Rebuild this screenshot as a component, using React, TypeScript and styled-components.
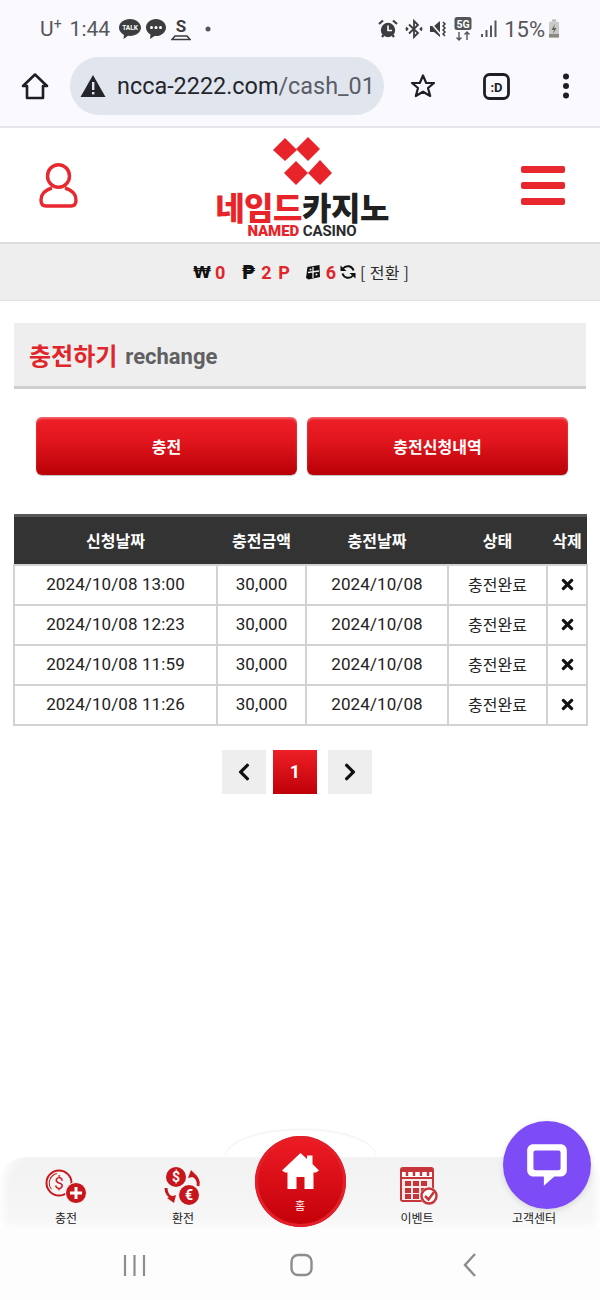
import React from "react";
import styled, { createGlobalStyle } from "styled-components";
import { FaTimes, FaChevronLeft, FaChevronRight } from "react-icons/fa";

const Global = createGlobalStyle`
  html, body { margin: 0; padding: 0; background: #fff; }
  * { box-sizing: border-box; }
`;

const SANS = `Roboto, "Noto Sans CJK KR", sans-serif`;
const KR = `"Noto Sans CJK KR", Roboto, sans-serif`;

const Page = styled.div`
  position: relative;
  width: 600px;
  height: 1300px;
  overflow: hidden;
  display: flex;
  flex-direction: column;
  background: #fff;
  font-family: ${SANS};
`;

const Chrome = styled.div`
  height: 128px;
  background: #f9f9fe;
  border-bottom: 2px solid #e6e6ea;
`;

const StatusBar = styled.div`
  height: 57px;
  padding: 1px 40px 0;
  display: flex;
  align-items: center;
  justify-content: space-between;
  color: #55565a;
  font-size: 21px;
`;

const StatusGroup = styled.div`
  display: flex;
  align-items: center;
`;

const StatusIcon = styled.span<{ $gap: number }>`
  display: flex;
  margin-left: ${(p) => p.$gap}px;
`;

const Carrier = styled.span`
  margin-right: 8px;
  sup { font-size: 14px; line-height: 0; vertical-align: 7px; }
`;

const Percent = styled.span`
  margin-left: 7px;
  font-size: 22px;
`;

const Toolbar = styled.div`
  height: 58px;
  padding: 0 0 0 21px;
  display: flex;
  align-items: center;
`;

const UrlPill = styled.div`
  width: 314px;
  height: 58px;
  margin-left: 21px;
  margin-right: 26px;
  border-radius: 29px;
  background: #e1e5ee;
  display: flex;
  align-items: center;
  padding-left: 10px;
  overflow: hidden;
  flex-shrink: 0;
`;

const UrlText = styled.span`
  margin-left: 11px;
  font-size: 23.4px;
  color: #24262b;
  white-space: nowrap;
  span { color: #5b5e66; }
`;

const ToolIcon = styled.div<{ $gap?: number }>`
  display: flex;
  margin-left: ${(p) => p.$gap ?? 0}px;
`;

const Header = styled.header`
  height: 114px;
  padding: 0 35px 0 39px;
  display: flex;
  align-items: center;
  justify-content: space-between;
  background: #fff;
`;

const Logo = styled.div`
  width: 176px;
  margin-left: 5px;
  align-self: flex-start;
  padding-top: 9px;
  display: flex;
  flex-direction: column;
  align-items: center;
`;

const LogoMark = styled.svg`
  display: block;
  margin-bottom: 4px;
`;

const LogoKr = styled.div`
  font-family: ${KR};
  font-weight: 900;
  font-size: 32px;
  line-height: 34px;
  height: 35px;
  letter-spacing: -0.5px;
  white-space: nowrap;
  color: #e8242a;
  span { color: #202020; }
`;

const LogoEn = styled.div`
  font-family: ${SANS};
  font-weight: 900;
  font-size: 15px;
  line-height: 15px;
  letter-spacing: -0.1px;
  white-space: nowrap;
  color: #e8242a;
  span { color: #2b2b2b; font-weight: 700; }
`;

const Burger = styled.div`
  width: 44px;
  display: flex;
  flex-direction: column;
  gap: 9px;
`;

const BurgerLine = styled.div`
  height: 7px;
  border-radius: 2px;
  background: #e8282e;
`;

const WalletBar = styled.div`
  height: 59px;
  background: #eeeeee;
  border-top: 2px solid #dcdcdc;
  border-bottom: 1px solid #e2e2e2;
  display: flex;
  align-items: center;
  justify-content: flex-start;
  padding-left: 194px;
  font-size: 17px;
  color: #222;
`;

const Symbol = styled.span<{ $width: number; $size: number }>`
  width: ${(p) => p.$width}px;
  display: flex;
  justify-content: center;
  font-family: "DejaVu Sans", sans-serif;
  font-weight: 700;
  font-size: ${(p) => p.$size}px;
  color: #111;
`;

const Amount = styled.span<{ $before: number; $after: number }>`
  font-family: ${SANS};
  font-weight: 700;
  font-size: 18px;
  letter-spacing: 1px;
  color: #e0252b;
  margin-left: ${(p) => p.$before}px;
  margin-right: ${(p) => p.$after}px;
`;

const Convert = styled.span`
  margin-left: 4px;
  font-family: ${KR};
  font-size: 16px;
  letter-spacing: 0.3px;
  color: #2a2a2a;
`;

const Main = styled.main`
  padding: 22px 14px 0;
`;

const TitleBox = styled.div`
  height: 66px;
  background: #eeeeee;
  border-bottom: 3px solid #cfcfcf;
  padding: 0 15px;
  display: flex;
  align-items: center;
  gap: 8px;
`;

const TitleKr = styled.h1`
  margin: 0;
  font-family: ${KR};
  font-weight: 700;
  font-size: 24px;
  color: #e0252b;
`;

const TitleEn = styled.span`
  font-weight: 700;
  font-size: 22px;
  color: #5f6062;
  padding-top: 4px;
`;

const ButtonRow = styled.div`
  margin-top: 28px;
  padding: 0 22px;
  display: grid;
  grid-template-columns: 261px 261px;
  gap: 10px;
`;

const RedButton = styled.button`
  height: 58px;
  border: 0;
  padding: 0;
  border-radius: 6px;
  background: linear-gradient(#ee1f27 0%, #e2161e 40%, #b80006 100%);
  box-shadow: inset 0 2px 2px rgba(255, 255, 255, 0.3), 0 1px 1px rgba(0, 0, 0, 0.25);
  color: #fff;
  font-family: ${KR};
  font-weight: 700;
  font-size: 16px;
`;

const Table = styled.table`
  margin: 39px 0 0 -1px;
  width: 573px;
  table-layout: fixed;
  border-collapse: collapse;
`;

const HeadCell = styled.th`
  height: 49px;
  padding: 0;
  background: #333333;
  border-top: 3px solid #585858;
  color: #fff;
  font-family: ${KR};
  font-weight: 700;
  font-size: 16px;
  text-align: center;
`;

const Cell = styled.td`
  height: 40px;
  padding: 0 0 1px;
  border: 2px solid #d2d2d2;
  background: #fff;
  text-align: center;
  color: #222;
  font-size: 17px;
  letter-spacing: 0.1px;
  font-family: ${SANS};
  svg { display: block; margin: 0 auto; }
`;

const StatusCell = styled(Cell)`
  font-family: ${KR};
  font-size: 16px;
  letter-spacing: 0;
`;

const Pager = styled.nav`
  margin-top: 24px;
  padding-right: 6px;
  display: flex;
  justify-content: center;
`;

const PageBtn = styled.div<{ $active?: boolean }>`
  width: 44px;
  height: 44px;
  margin: ${(p) => (p.$active ? "0 11px 0 7px" : "0")};
  display: flex;
  align-items: center;
  justify-content: center;
  background: ${(p) => (p.$active ? "linear-gradient(#ee1f27, #c00008)" : "#eeeeee")};
  color: ${(p) => (p.$active ? "#fff" : "#111")};
  font-weight: 700;
  font-size: 18px;
`;

const TabBar = styled.div`
  position: relative;
  margin-top: auto;
  height: 71px;
  padding: 0 7.5px;
  display: grid;
  grid-template-columns: repeat(5, 117px);
  background: linear-gradient(#f2f2f2, #f6f6f6 85%, #fbfbfb);
  border-top-left-radius: 26px;
  border-top-right-radius: 26px;
  box-shadow: inset 10px 0 10px -6px #fff, inset -10px 0 10px -6px #fff;
  &::before {
    content: "";
    position: absolute;
    left: 226px;
    top: -27px;
    width: 150px;
    height: 28px;
    background: #fff;
    border-radius: 75px 75px 0 0 / 27px 27px 0 0;
    box-shadow: 0 -1px 2px rgba(0, 0, 0, 0.07);
    clip-path: inset(-4px -4px 1px -4px);
  }
`;

const Tab = styled.div`
  position: relative;
  display: flex;
  flex-direction: column;
  align-items: center;
  justify-content: flex-end;
  padding-bottom: 1px;
`;

const TabIcon = styled.div<{ $shift?: number }>`
  height: 46px;
  display: flex;
  align-items: center;
  justify-content: center;
  margin-left: ${(p) => p.$shift ?? 0}px;
`;

const TabLabel = styled.span`
  font-family: ${KR};
  font-size: 12px;
  line-height: 18px;
  color: #222;
`;

const HomeButton = styled.div`
  position: absolute;
  left: 13px;
  top: -21px;
  width: 91px;
  height: 91px;
  border-radius: 50%;
  background: linear-gradient(#ee1c25, #c30009);
  box-shadow: inset 0 0 0 3px #e3202a;
  display: flex;
  flex-direction: column;
  align-items: center;
  padding-top: 17px;
  color: #fff;
`;

const HomeLabel = styled.span`
  font-family: ${KR};
  font-size: 11px;
  line-height: 14px;
  margin-top: 9px;
`;

const ChatBubble = styled.div`
  position: absolute;
  left: 503px;
  top: 1121px;
  width: 88px;
  height: 88px;
  border-radius: 50%;
  background: #7e4cf7;
  box-shadow: 0 2px 6px rgba(0, 0, 0, 0.12);
  display: flex;
  align-items: center;
  justify-content: center;
`;

const SystemNav = styled.div`
  height: 72px;
  background: #fdfdfe;
  padding: 2px 0 0 123px;
  display: flex;
  align-items: center;
  gap: 144px;
  svg { display: block; }
`;

const rows = ["2024/10/08 13:00", "2024/10/08 12:23", "2024/10/08 11:59", "2024/10/08 11:26"];

const Alarm = () => (
  <svg width="20" height="20" viewBox="0 0 20 20">
    <circle cx="10" cy="11" r="7.2" fill="#3d3d40" />
    <path d="M10 6.500V11.500H14" stroke="#fff" strokeWidth="1.6" fill="none" />
    <path d="M1 5L5 1.500M19 5L15 1.500M4 18l1.500-2M16 18l-1.500-2" stroke="#3d3d40" strokeWidth="2.2" />
  </svg>
);
const Bluetooth = () => (
  <svg width="20" height="22" viewBox="0 0 20 22" fill="none" stroke="#3d3d40" strokeWidth="1.8">
    <path d="M5 6.500L14 15L10 19V3L14 7L5 15.500" />
    <path d="M2 9.500l1.500 1.500L2 12.500M18 9.500l-1.500 1.500L18 12.500" />
  </svg>
);
const Mute = () => (
  <svg width="22" height="22" viewBox="0 0 22 22">
    <path d="M2 8H6L12 3V19L6 14H2Z" fill="#3d3d40" />
    <path d="M1 3L14 18" stroke="#f9f9fe" strokeWidth="1.500" />
    <path d="M15 4l2 2-2 2 2 2-2 2 2 2-2 2 2 2" stroke="#3d3d40" strokeWidth="1.500" fill="none" />
  </svg>
);
const FiveG = () => (
  <svg width="20" height="26" viewBox="0 0 20 26">
    <rect x="1.500" y="1" width="17" height="13" rx="2.500" fill="#55565a" />
    <text x="10" y="11.500" fontSize="10.500" fontWeight="700" fill="#fff" textAnchor="middle" fontFamily="Roboto">5G</text>
    <path d="M6 16V24M3.500 21.500L6 24L8.500 21.500M14 24V16M11.500 18.500L14 16L16.500 18.500" stroke="#55565a" strokeWidth="1.400" fill="none" />
  </svg>
);
const Signal = () => (
  <svg width="17" height="20" viewBox="0 0 17 20" fill="#55565a">
    <rect x="1" y="15" width="2" height="3" />
    <rect x="5.500" y="11" width="2" height="7" />
    <rect x="10" y="6.500" width="2" height="11.500" />
    <rect x="14.500" y="1.500" width="2" height="16.500" />
  </svg>
);
const Battery = () => (
  <svg width="12" height="20" viewBox="0 0 12 20">
    <rect x="4" y="0.500" width="4" height="2" fill="#b5b5b5" />
    <rect x="1" y="2.500" width="10" height="16" rx="1.500" fill="#c9c9c9" />
    <rect x="1" y="15" width="10" height="3.500" fill="#8a8a80" />
    <path d="M7 5L3.500 11H6L5 15L8.500 9H6Z" fill="#65655c" />
  </svg>
);

const Charge = () => (
  <svg width="42" height="34" viewBox="0 0 42 34" fill="none">
    <circle cx="14" cy="14" r="12.500" stroke="#c8161d" strokeWidth="2" />
    <circle cx="14" cy="14" r="9.800" stroke="#c8161d" strokeWidth="1" strokeDasharray="20 42" transform="rotate(140 14 14)" />
    <text x="14" y="20" textAnchor="middle" fontSize="17" fontFamily="Roboto" fill="#c8161d">$</text>
    <circle cx="31" cy="24" r="10.500" fill="#c8161d" stroke="#f4f4f4" strokeWidth="1" />
    <path d="M31 18V30M25 24H37" stroke="#fff" strokeWidth="3" />
  </svg>
);
const Exchange = () => (
  <svg width="38" height="40" viewBox="0 0 38 40" fill="none">
    <circle cx="12" cy="11" r="10" fill="#c8161d" />
    <text x="12" y="16" textAnchor="middle" fontSize="14" fontWeight="700" fontFamily="Roboto" fill="#fff">$</text>
    <circle cx="25" cy="29" r="10" fill="#c8161d" />
    <text x="25" y="34" textAnchor="middle" fontSize="14" fontWeight="700" fontFamily="Roboto" fill="#fff">€</text>
    <path d="M34 20C35 15 33 11 28 9" stroke="#c8161d" strokeWidth="3" />
    <path d="M24 12L27 4L33 10Z" fill="#c8161d" />
    <path d="M2 22C2 27 5 31 9 32" stroke="#c8161d" strokeWidth="3" />
    <path d="M12 29L10 37L3 32Z" fill="#c8161d" />
  </svg>
);
const Calendar = () => (
  <svg width="40" height="40" viewBox="0 0 40 40">
    <rect x="1" y="1" width="34" height="35" rx="3" fill="#c5353a" />
    <rect x="3" y="6" width="30" height="5" fill="#fff" />
    <path d="M8 3V10M15 3V10M22 3V10M29 3V10" stroke="#c5353a" strokeWidth="2.500" />
    <rect x="3" y="13" width="30" height="21" fill="#fbeaea" />
    {[6, 14, 22].map((x) => [15, 22, 28].map((y) => <rect key={`${x}-${y}`} x={x} y={y} width="6" height="5" fill="#c5353a" />))}
    <circle cx="30" cy="30" r="9" fill="#fff" />
    <circle cx="30" cy="30" r="7.500" fill="none" stroke="#c5353a" strokeWidth="2.500" />
    <path d="M26 30L29.500 33.500L35 26" fill="none" stroke="#c5353a" strokeWidth="2.500" />
  </svg>
);

export default function App() {
  return (
    <Page>
      <Global />
      <Chrome>
        <StatusBar>
          <StatusGroup>
            <Carrier>U<sup>+</sup></Carrier>
            <span>1:44</span>
            <StatusIcon $gap={8}>
              <svg width="24" height="22" viewBox="0 0 24 22">
                <path d="M12 1C5.900 1 1 4.900 1 9.700c0 3 2 5.600 5 7.200L5.500 21l4.500-3.200c.6.100 1.300.1 2 .1 6.100 0 11-3.900 11-8.200S18.100 1 12 1Z" fill="#3d3d40" />
                <text x="12" y="12" textAnchor="middle" fontSize="6.500" fontWeight="700" fontFamily="Roboto" fill="#fff">TALK</text>
              </svg>
            </StatusIcon>
            <StatusIcon $gap={3}>
              <svg width="22" height="22" viewBox="0 0 22 22">
                <path d="M11 1C5.500 1 1 4.800 1 9.500c0 3 1.800 5.500 4.500 7L5 21l4.500-3c.5.100 1 .1 1.500.1 5.500 0 10-3.900 10-8.600S16.500 1 11 1Z" fill="#3d3d40" />
                <circle cx="6.500" cy="9.500" r="1.500" fill="#fff" />
                <circle cx="11" cy="9.500" r="1.500" fill="#fff" />
                <circle cx="15.500" cy="9.500" r="1.500" fill="#fff" />
              </svg>
            </StatusIcon>
            <StatusIcon $gap={4}>
              <svg width="20" height="24" viewBox="0 0 20 24">
                <text x="10" y="15" textAnchor="middle" fontSize="17" fontWeight="700" fontFamily="Roboto" fill="#3d3d40">S</text>
                <path d="M1 22.500H19L16 19H4Z" fill="none" stroke="#3d3d40" strokeWidth="1.600" />
              </svg>
            </StatusIcon>
            <StatusIcon $gap={14}>
              <svg width="6" height="6" viewBox="0 0 6 6">
                <circle cx="3" cy="3" r="2.500" fill="#55565a" />
              </svg>
            </StatusIcon>
          </StatusGroup>
          <StatusGroup>
            <Alarm />
            <StatusIcon $gap={6}><Bluetooth /></StatusIcon>
            <StatusIcon $gap={4}><Mute /></StatusIcon>
            <StatusIcon $gap={3}><FiveG /></StatusIcon>
            <StatusIcon $gap={7}><Signal /></StatusIcon>
            <Percent>15%</Percent>
            <StatusIcon $gap={3}><Battery /></StatusIcon>
          </StatusGroup>
        </StatusBar>
        <Toolbar>
          <svg width="28" height="28" viewBox="0 0 28 28" fill="none" stroke="#1d1f24" strokeWidth="2.600" strokeLinejoin="round">
            <path d="M14 2.500L2 14H6V26H22V14H26Z" />
          </svg>
          <UrlPill>
            <svg width="26" height="24" viewBox="0 0 26 24">
              <path d="M13 1L25.500 23H.5Z" fill="#24262b" />
              <rect x="12" y="8" width="2.400" height="8" fill="#e1e5ee" />
              <rect x="12" y="18" width="2.400" height="2.400" fill="#e1e5ee" />
            </svg>
            <UrlText>ncca-2222.com<span>/cash_01</span></UrlText>
          </UrlPill>
          <svg width="26" height="26" viewBox="0 0 26 26" fill="none" stroke="#1d1f24" strokeWidth="2.200" strokeLinejoin="round">
            <path d="M13 2.500L16.200 10H24L18 15L20.200 23L13 18.700L5.800 23L8 15L2 10H9.800Z" />
          </svg>
          <ToolIcon $gap={47}>
            <svg width="27" height="27" viewBox="0 0 27 27">
              <rect x="1.500" y="1.500" width="24" height="24" rx="5" fill="none" stroke="#1d1f24" strokeWidth="2.800" />
              <text x="13.500" y="18.500" textAnchor="middle" fontSize="13" fontWeight="700" fontFamily="Roboto" fill="#1d1f24">:D</text>
            </svg>
          </ToolIcon>
          <ToolIcon $gap={52}>
            <svg width="8" height="26" viewBox="0 0 8 26" fill="#1d1f24">
              <circle cx="4" cy="3.500" r="3" />
              <circle cx="4" cy="13" r="3" />
              <circle cx="4" cy="22.500" r="3" />
            </svg>
          </ToolIcon>
        </Toolbar>
      </Chrome>

      <Header>
        <svg width="39" height="45" viewBox="0 0 39 45" fill="none" stroke="#e8282e" strokeWidth="3.400" strokeLinejoin="round">
          <ellipse cx="19.500" cy="13" rx="11" ry="11.300" />
          <path d="M13 25C6 27 2 31 2 37C2 41 4 43 7 43H32C35 43 37 41 37 37C37 31 33 27 26 25" />
        </svg>
        <Logo>
          <LogoMark width="60" height="48" viewBox="0 0 60 48" fill="#e8242a">
            <path d="M13 1L25 13L13 24L1 13Z" />
            <path d="M36 0L48 12L36 24L24 12Z" />
            <path d="M24 24L36 36L24 48L12 36Z" />
            <path d="M48 23L60 36L48 48L36 36Z" />
          </LogoMark>
          <LogoKr>네임드<span>카지노</span></LogoKr>
          <LogoEn>NAMED <span>CASINO</span></LogoEn>
        </Logo>
        <Burger>
          <BurgerLine />
          <BurgerLine />
          <BurgerLine />
        </Burger>
      </Header>

      <WalletBar>
        <Symbol $width={16} $size={16}>₩</Symbol>
        <Amount $before={5} $after={15}>0</Amount>
        <Symbol $width={14} $size={19}>₱</Symbol>
        <Amount $before={6} $after={14}>2 P</Amount>
        <svg width="16" height="17" viewBox="0 0 16 17">
          <path d="M2.500 3L14.500 1L15 13L3.500 15.500L1 14Z" fill="#111" />
          <path d="M8 3V14M3 8.500L14 7" stroke="#eee" strokeWidth="1.300" />
          <circle cx="5.500" cy="5.500" r="1" fill="#eee" />
          <circle cx="11.500" cy="10.500" r="1" fill="#eee" />
        </svg>
        <Amount $before={5} $after={3}>6</Amount>
        <svg width="16" height="16" viewBox="0 0 16 16" fill="#111">
          <path d="M13.500 6.500A6 6 0 0 0 3 4.500" fill="none" stroke="#111" strokeWidth="2" />
          <path d="M2.500 9.500A6 6 0 0 0 13 11.500" fill="none" stroke="#111" strokeWidth="2" />
          <path d="M0.500 1.500L6.500 7H0.500Z" />
          <path d="M15.500 14.500L9.500 9H15.500Z" />
        </svg>
        <Convert>[ 전환 ]</Convert>
      </WalletBar>

      <Main>
        <TitleBox>
          <TitleKr>충전하기</TitleKr>
          <TitleEn>rechange</TitleEn>
        </TitleBox>
        <ButtonRow>
          <RedButton>충전</RedButton>
          <RedButton>충전신청내역</RedButton>
        </ButtonRow>
        <Table>
          <colgroup>
            <col style={{ width: 203 }} />
            <col style={{ width: 89 }} />
            <col style={{ width: 142 }} />
            <col style={{ width: 99 }} />
            <col style={{ width: 40 }} />
          </colgroup>
          <thead>
            <tr>
              <HeadCell>신청날짜</HeadCell>
              <HeadCell>충전금액</HeadCell>
              <HeadCell>충전날짜</HeadCell>
              <HeadCell>상태</HeadCell>
              <HeadCell>삭제</HeadCell>
            </tr>
          </thead>
          <tbody>
            {rows.map((r) => (
              <tr key={r}>
                <Cell>{r}</Cell>
                <Cell>30,000</Cell>
                <Cell>2024/10/08</Cell>
                <StatusCell>충전완료</StatusCell>
                <Cell><FaTimes size={17} color="#111" /></Cell>
              </tr>
            ))}
          </tbody>
        </Table>
        <Pager>
          <PageBtn><FaChevronLeft size={20} /></PageBtn>
          <PageBtn $active>1</PageBtn>
          <PageBtn><FaChevronRight size={20} /></PageBtn>
        </Pager>
      </Main>

      <TabBar>
        <Tab>
          <TabIcon><Charge /></TabIcon>
          <TabLabel>충전</TabLabel>
        </Tab>
        <Tab>
          <TabIcon><Exchange /></TabIcon>
          <TabLabel>환전</TabLabel>
        </Tab>
        <Tab>
          <HomeButton>
            <svg width="37" height="36" viewBox="0 0 37 36" fill="#fff">
              <path d="M18.500 0L25 6V2.500H30.500V11L37 17.500L34 19.500H31.500V36H22.500V24H14.500V36H5.500V19.500H3L0 17.500Z" />
            </svg>
            <HomeLabel>홈</HomeLabel>
          </HomeButton>
        </Tab>
        <Tab>
          <TabIcon $shift={3}><Calendar /></TabIcon>
          <TabLabel>이벤트</TabLabel>
        </Tab>
        <Tab>
          <TabIcon />
          <TabLabel>고객센터</TabLabel>
        </Tab>
      </TabBar>

      <SystemNav>
        <svg width="23" height="23" viewBox="0 0 23 23" stroke="#8d8d8f" strokeWidth="2.200">
          <path d="M2 1V22M11.500 1V22M21 1V22" />
        </svg>
        <svg width="29" height="24" viewBox="0 0 29 24" fill="none" stroke="#8d8d8f" strokeWidth="2.400">
          <rect x="1.500" y="2" width="20" height="20" rx="6.500" />
        </svg>
        <svg width="13" height="24" viewBox="0 0 13 24" fill="none" stroke="#8d8d8f" strokeWidth="2.400">
          <path d="M12 1L2 12L12 23" />
        </svg>
      </SystemNav>

      <ChatBubble>
        <svg width="46" height="48" viewBox="0 0 44 46">
          <path d="M9 3H35C38.500 3 41 5.500 41 9V28C41 31.500 38.500 34 35 34H29L19 43V34H9C5.500 34 3 31.500 3 28V9C3 5.500 5.500 3 9 3Z" fill="#fff" />
          <rect x="9" y="9" width="26" height="19" rx="2" fill="#7e4cf7" />
        </svg>
      </ChatBubble>
    </Page>
  );
}
